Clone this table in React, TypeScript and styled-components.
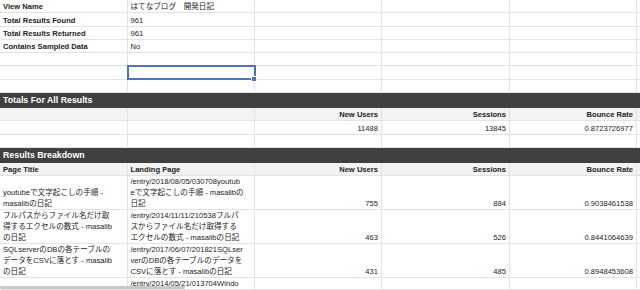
import styled, { createGlobalStyle, css } from "styled-components";

const GlobalStyle = createGlobalStyle`
  html, body {
    margin: 0;
    padding: 0;
    background: #ffffff;
    overflow: hidden;
  }
  body {
    font-family: "Liberation Sans", "Noto Sans CJK JP", Arial, sans-serif;
    color: #222222;
  }
`;

const Sheet = styled.div`
  position: relative;
  width: 640px;
  height: 290px;
  overflow: hidden;
`;

const Row = styled.div<{ $height: number; $shade?: boolean }>`
  display: grid;
  grid-template-columns: 127.5px 127.5px 127px 128px 127px 1fr;
  height: ${(p) => p.$height}px;
  box-sizing: border-box;
  border-bottom: 1px solid #e3e3e3;
  background: ${(p) => (p.$shade ? "#f3f3f3" : "#ffffff")};
`;

const Cell = styled.div<{ $right?: boolean; $bold?: boolean; $selected?: boolean }>`
  position: relative;
  display: flex;
  flex-direction: column;
  justify-content: flex-end;
  align-items: ${(p) => (p.$right ? "flex-end" : "flex-start")};
  padding: 0 3px 0 3px;
  border-right: 1px solid #e3e3e3;
  font-size: 7.6px;
  line-height: 11px;
  font-weight: ${(p) => (p.$bold ? 700 : 400)};
  white-space: nowrap;
  overflow: hidden;

  ${(p) =>
    p.$selected &&
    css`
      overflow: visible;
      outline: 2px solid #4a76b8;
      outline-offset: -1px;
      z-index: 2;

      &::after {
        content: "";
        position: absolute;
        right: -3px;
        bottom: -3px;
        width: 4px;
        height: 4px;
        background: #4a76b8;
        border: 1px solid #ffffff;
      }
    `}
`;

const Band = styled.div`
  height: 15px;
  background: #404040;
  color: #ffffff;
  font-size: 8.8px;
  font-weight: 700;
  line-height: 15px;
  padding-left: 3px;
  box-sizing: border-box;
`;

const Scrollbar = styled.div`
  position: absolute;
  left: 0;
  bottom: 1px;
  width: 185px;
  height: 3px;
  border-radius: 2px;
  background: #c9c9c9;
`;

const SMALL = 13.3;
const TALL = 33.8;

const summary: [string, string][] = [
  ["View Name", "はてなブログ　開発日記"],
  ["Total Results Found", "961"],
  ["Total Results Returned", "961"],
  ["Contains Sampled Data", "No"],
  ["", ""],
  ["", ""],
  ["", ""],
];

type Result = {
  title: string[];
  landing: string[];
  users: string;
  sessions: string;
  bounce: string;
  height: number;
};

const results: Result[] = [
  {
    title: ["youtubeで文字起こしの手順 -", "masalibの日記"],
    landing: ["/entry/2018/08/05/030708youtub", "eで文字起こしの手順 - masalibの", "日記"],
    users: "755",
    sessions: "884",
    bounce: "0.9038461538",
    height: TALL,
  },
  {
    title: ["フルパスからファイル名だけ取", "得するエクセルの数式 - masalib", "の日記"],
    landing: ["/entry/2014/11/11/210538フルパ", "スからファイル名だけ取得する", "エクセルの数式 - masalibの日記"],
    users: "463",
    sessions: "526",
    bounce: "0.8441064639",
    height: TALL,
  },
  {
    title: ["SQLserverのDBの各テーブルの", "データをCSVに落とす - masalib", "の日記"],
    landing: ["/entry/2017/06/07/201821SQLser", "verのDBの各テーブルのデータを", "CSVに落とす - masalibの日記"],
    users: "431",
    sessions: "485",
    bounce: "0.8948453608",
    height: TALL,
  },
  {
    title: [],
    landing: ["/entry/2014/05/21/013704Windo"],
    users: "",
    sessions: "",
    bounce: "",
    height: 12,
  },
];

function Lines({ lines }: { lines: string[] }) {
  return (
    <>
      {lines.map((line, i) => (
        <span key={i}>{line}</span>
      ))}
    </>
  );
}

export default function App() {
  return (
    <Sheet>
      <GlobalStyle />
      {summary.map(([label, value], i) => (
        <Row key={i} $height={SMALL}>
          <Cell $bold>{label}</Cell>
          <Cell $selected={i === 5}>{value}</Cell>
          <Cell />
          <Cell />
          <Cell />
          <Cell />
        </Row>
      ))}

      <Band>Totals For All Results</Band>
      <Row $height={SMALL} $shade>
        <Cell />
        <Cell />
        <Cell $right $bold>New Users</Cell>
        <Cell $right $bold>Sessions</Cell>
        <Cell $right $bold>Bounce Rate</Cell>
        <Cell />
      </Row>
      <Row $height={SMALL}>
        <Cell />
        <Cell />
        <Cell $right>11488</Cell>
        <Cell $right>13845</Cell>
        <Cell $right>0.8723726977</Cell>
        <Cell />
      </Row>
      <Row $height={SMALL}>
        <Cell />
        <Cell />
        <Cell />
        <Cell />
        <Cell />
        <Cell />
      </Row>

      <Band>Results Breakdown</Band>
      <Row $height={SMALL} $shade>
        <Cell $bold>Page Title</Cell>
        <Cell $bold>Landing Page</Cell>
        <Cell $right $bold>New Users</Cell>
        <Cell $right $bold>Sessions</Cell>
        <Cell $right $bold>Bounce Rate</Cell>
        <Cell />
      </Row>
      {results.map((r, i) => (
        <Row key={i} $height={r.height}>
          <Cell>
            <Lines lines={r.title} />
          </Cell>
          <Cell>
            <Lines lines={r.landing} />
          </Cell>
          <Cell $right>{r.users}</Cell>
          <Cell $right>{r.sessions}</Cell>
          <Cell $right>{r.bounce}</Cell>
          <Cell />
        </Row>
      ))}
      <Scrollbar />
    </Sheet>
  );
}
